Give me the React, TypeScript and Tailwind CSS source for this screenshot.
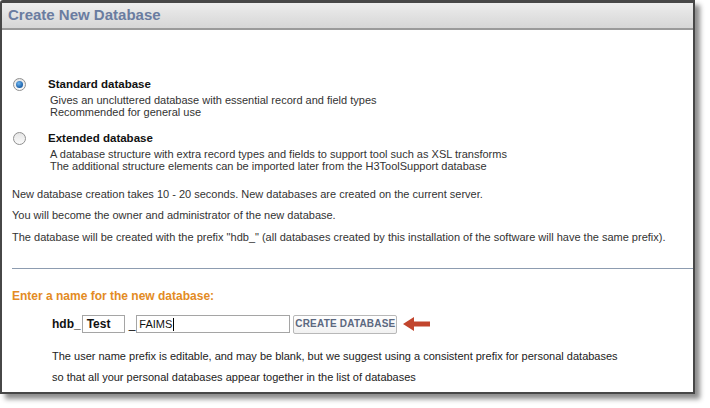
import React from "react";

function Radio({ checked }: { checked?: boolean }) {
  return (
    <span className="mt-[1px] flex h-[13px] w-[13px] shrink-0 items-center justify-center rounded-full border border-[#8f8f8f] bg-gradient-to-b from-[#e6e6e6] to-[#fafafa]">
      {checked && (
        <span className="h-[7px] w-[7px] rounded-full bg-[radial-gradient(circle_at_40%_35%,#6fb6f0,#1a5fa8_70%)]" />
      )}
    </span>
  );
}

export default function App() {
  return (
    <div className="h-[408px] w-[710px] bg-white" style={{ fontFamily: '"Liberation Sans", Arial, sans-serif' }}>
      <div className="h-[394px] w-[695px] rounded-tl-[3px] border-2 border-t-[3px] border-[#474747] bg-white shadow-[5px_5px_5px_rgba(0,0,0,0.45)]">
        {/* ヘッダー */}
        <div className="flex h-[27px] items-center border-b-2 border-[#9a9a9a] bg-gradient-to-b from-[#ededed] to-[#d6d6d6] pl-[6px]">
          <span className="text-[15px] font-bold text-[#6a7ca0]">Create New Database</span>
        </div>

        <div className="pl-[10px] text-[11px] leading-[12px] text-[#333]">
          {/* 標準データベース */}
          <div className="mt-[47px] flex gap-[22px] pl-[1px]">
            <Radio checked />
            <div>
              <div className="text-[11.5px] font-bold leading-[14px] text-[#111]">Standard database</div>
              <div className="mt-[3px] pl-[2px]">
                <div>Gives an uncluttered database with essential record and field types</div>
                <div>Recommended for general use</div>
              </div>
            </div>
          </div>

          {/* 拡張データベース */}
          <div className="mt-[13px] flex gap-[22px] pl-[1px]">
            <Radio />
            <div>
              <div className="text-[11.5px] font-bold leading-[14px] text-[#111]">Extended database</div>
              <div className="mt-[3px] pl-[2px]">
                <div>A database structure with extra record types and fields to support tool such as XSL transforms</div>
                <div>The additional structure elements can be imported later from the H3ToolSupport database</div>
              </div>
            </div>
          </div>

          <p className="mt-[15px] leading-[14px]">
            New database creation takes 10 - 20 seconds. New databases are created on the current server.
          </p>
          <p className="mt-[7px] leading-[14px]">You will become the owner and administrator of the new database.</p>
          <p className="mt-[8px] leading-[14px]">
            The database will be created with the prefix "hdb_" (all databases created by this installation of the software will have the same prefix).
          </p>

          <div className="mt-[24px] h-px bg-[#8d9cb0]" />

          <div className="mt-[20px] text-[12px] font-bold leading-[14px] text-[#e38b24]">
            Enter a name for the new database:
          </div>

          {/* 名前入力 */}
          <div className="mt-[12px] flex h-[18px] items-center pl-[40px]">
            <span className="text-[12px] font-bold text-[#111]">hdb_</span>
            <span className="ml-[1px] flex h-[18px] w-[43px] items-center border border-[#a5a5a5] pl-[4px] text-[12px] font-bold text-[#111]">
              Test
            </span>
            <span className="ml-[4px] text-[12px] text-[#111]">_</span>
            <span className="ml-[1px] flex h-[18px] w-[154px] items-center border border-[#a5a5a5] pl-[2px] text-[11px] text-[#111]">
              FAIMS<span className="ml-[1px] h-[13px] w-px bg-black" />
            </span>
            <span className="ml-[3px] flex h-[19px] w-[104px] items-center justify-center rounded-[2px] border border-[#b8b8b8] bg-gradient-to-b from-white to-[#f1f1f1] text-[10px] font-bold tracking-[0.2px] text-[#5c6880]">
              CREATE DATABASE
            </span>
            <svg className="ml-[6px]" width="28" height="14" viewBox="0 0 28 14">
              <polygon points="0,7 11,0 11,4.5 27,4.5 27,9.5 11,9.5 11,14" fill="#c2452d" />
            </svg>
          </div>

          <div className="mt-[13px] pl-[40px] leading-[21px] text-[#222]">
            <div>The user name prefix is editable, and may be blank, but we suggest using a consistent prefix for personal databases</div>
            <div>so that all your personal databases appear together in the list of databases</div>
          </div>
        </div>
      </div>
    </div>
  );
}
